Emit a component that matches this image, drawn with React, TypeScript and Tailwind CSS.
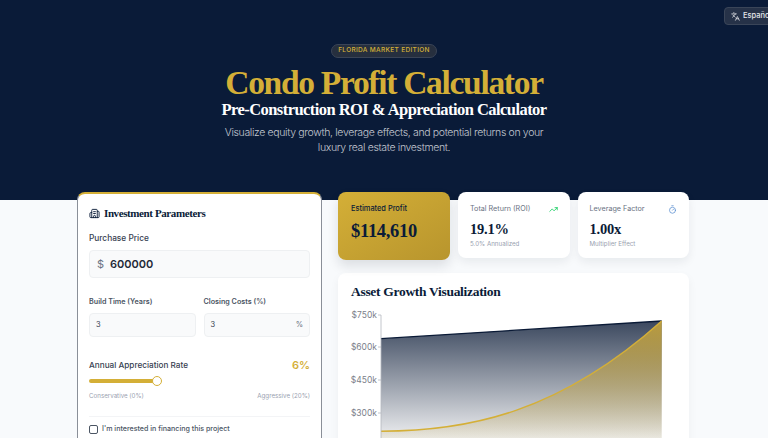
import { Building2, Languages, Timer, TrendingUp } from 'lucide-react'

const serif = "font-['Liberation_Serif',serif]"

function StatCard({ label, value, note, icon }: { label: string; value: string; note: string; icon: React.ReactNode }) {
  return (
    <div className="h-[66px] flex-1 rounded-lg bg-white pl-[12px] pr-[12px] pt-[11px] shadow-[0_4px_10px_rgba(15,23,42,0.07)]">
      <div className="flex items-center justify-between text-[7.2px] leading-[12px] text-gray-500">
        <span>{label}</span>
        {icon}
      </div>
      <div className={`${serif} mt-[5px] text-[14.5px] font-bold leading-[18px] tracking-[-0.2px] text-[#0b1b36]`}>{value}</div>
      <div className="mt-[1px] text-[6.2px] leading-[10px] text-gray-400">{note}</div>
    </div>
  )
}

function GrowthChart() {
  const goldCurve = 'M381 431.3 C470 431 560 412 661.7 321'
  return (
    <svg viewBox="338 300 351 138" className="block h-[138px] w-[351px]">
      <defs>
        <linearGradient id="navyFill" x1="0" y1="321" x2="0" y2="445" gradientUnits="userSpaceOnUse">
          <stop offset="0" stopColor="#0a1a36" stopOpacity="0.8" />
          <stop offset="1" stopColor="#0a1a36" stopOpacity="0.03" />
        </linearGradient>
        <linearGradient id="goldFill" x1="0" y1="321" x2="0" y2="445" gradientUnits="userSpaceOnUse">
          <stop offset="0" stopColor="#c9a63c" stopOpacity="0.9" />
          <stop offset="1" stopColor="#c9a63c" stopOpacity="0.05" />
        </linearGradient>
      </defs>
      <path d="M381 338.7 L661.7 321 L661.7 438 L381 438 Z" fill="url(#navyFill)" />
      <path d={`${goldCurve} L661.7 438 L381 438 Z`} fill="url(#goldFill)" />
      <path d="M381 338.7 L661.7 321" stroke="#0a1a36" strokeWidth="1.3" fill="none" />
      <path d={goldCurve} stroke="#d4af37" strokeWidth="1.5" fill="none" />
      <path d="M381 315 V438" stroke="#b4b8bf" strokeWidth="0.8" />
      {[
        ['$750k', 315],
        ['$600k', 347],
        ['$450k', 380],
        ['$300k', 413],
      ].map(([label, y]) => (
        <g key={label as string}>
          <path d={`M378 ${y} H381`} stroke="#b4b8bf" strokeWidth="0.8" />
          <text x="377" y={(y as number) + 3} textAnchor="end" fontSize="8.5" fill="#7b808a" fontFamily="Inter, sans-serif">
            {label}
          </text>
        </g>
      ))}
    </svg>
  )
}

export default function App() {
  return (
    <div className="relative h-[438px] overflow-hidden bg-[#f8fafc] font-['Inter',sans-serif]">
      <header className="flex h-[200px] flex-col items-center bg-[#0a1b38] pt-[44px]">
        <span className="flex h-[14px] items-center rounded-full border border-[#3a4456] bg-[#262f3e] px-[6px] text-[6.5px] font-medium tracking-[0.05em] text-[#d4af37]">
          FLORIDA MARKET EDITION
        </span>
        <h1 className={`${serif} mt-[5px] text-[33.5px] font-bold leading-[40px] tracking-[-1.3px] text-[#d4af37]`}>Condo Profit Calculator</h1>
        <h2 className={`${serif} text-[16.5px] font-bold leading-[14px] tracking-[-0.55px] text-white`}>Pre-Construction ROI &amp; Appreciation Calculator</h2>
        <p className="mt-[8px] w-[340px] text-center text-[10.5px] font-light leading-[15px] tracking-[-0.35px] text-[#c3c8d1]">
          Visualize equity growth, leverage effects, and potential returns on your luxury real estate investment.
        </p>
      </header>

      <div className="absolute left-[724px] top-[7px] flex h-[18px] w-[60px] items-center gap-[3px] rounded-[4px] border border-[#3a4558] bg-[#263248] pl-[6px] text-[7.5px] font-medium text-[#e5e7eb]">
        <Languages size={9} />
        <span>Español</span>
      </div>

      <main className="mx-[77px] -mt-[8px] flex gap-4">
        <section className="h-[300px] w-[245px] shrink-0 rounded-lg border border-x-[#8a8f98] border-b-[#8a8f98] border-t-2 border-t-[#d4af37] bg-white px-[11px] pt-[11px]">
          <div className="flex items-center gap-[4px] text-[#0a1b38]">
            <Building2 size={11} />
            <span className={`${serif} text-[11px] font-bold leading-[16px] tracking-[-0.4px]`}>Investment Parameters</span>
          </div>
          <label className="mt-[11px] block text-[8.3px] font-medium leading-[12px] text-[#374151]">Purchase Price</label>
          <div className="mt-[6px] flex h-[28px] items-center rounded border border-[#eef0f2] bg-[#f9fafb] pl-[7px] text-[11px] text-[#1f2937]">
            <span className="text-gray-500">$</span>
            <span className="ml-[6px] font-semibold">600000</span>
          </div>
          <div className="mt-[18px] grid grid-cols-2 gap-2">
            <div>
              <label className="block text-[7.2px] font-semibold leading-[11px] text-[#4b5563]">Build Time (Years)</label>
              <div className="mt-[6px] flex h-[24px] items-center rounded border border-[#eef0f2] bg-[#f9fafb] pl-[6px] text-[7.5px] text-[#374151]">3</div>
            </div>
            <div>
              <label className="block text-[7.2px] font-semibold leading-[11px] text-[#4b5563]">Closing Costs (%)</label>
              <div className="mt-[6px] flex h-[24px] items-center justify-between rounded border border-[#eef0f2] bg-[#f9fafb] px-[6px] text-[7.5px] text-[#374151]">
                <span>3</span>
                <span className="text-gray-500">%</span>
              </div>
            </div>
          </div>
          <div className="mt-[22px] flex items-center justify-between">
            <span className="text-[8.2px] font-medium leading-[12px] text-[#374151]">Annual Appreciation Rate</span>
            <span className="text-[11px] font-semibold leading-[12px] text-[#d4af37]">6%</span>
          </div>
          <div className="relative mt-[5px] h-[10px]">
            <div className="absolute left-0 top-[3px] h-[4px] w-[68px] rounded-full bg-[#d4af37]" />
            <div className="absolute left-[63px] top-0 h-[10px] w-[10px] rounded-full border border-[#d4af37] bg-white" />
          </div>
          <div className="mt-[5px] flex justify-between text-[6.2px] leading-[10px] text-gray-400">
            <span>Conservative (0%)</span>
            <span>Aggressive (20%)</span>
          </div>
          <div className="mt-[15px] border-t border-gray-100 pt-[7px]">
            <div className="flex items-center gap-[4px]">
              <span className="h-[9px] w-[9px] rounded-[2px] border border-[#4b5563] bg-white" />
              <span className="text-[7.1px] font-medium leading-[10px] text-[#4b5563]">I'm interested in financing this project</span>
            </div>
          </div>
        </section>

        <div className="w-[351px]">
          <div className="flex gap-2">
            <div className="h-[68px] w-[112px] shrink-0 rounded-lg bg-gradient-to-br from-[#d4af37] to-[#b8952d] px-[13px] pt-[11px] shadow-[0_6px_12px_rgba(15,23,42,0.12)]">
              <div className="text-[7.4px] font-medium leading-[12px] text-[#0a1b38]">Estimated Profit</div>
              <div className={`${serif} mt-[4px] text-[18.5px] font-bold leading-[24px] tracking-[-0.3px] text-[#0a1b38]`}>$114,610</div>
            </div>
            <StatCard label="Total Return (ROI)" value="19.1%" note="5.0% Annualized" icon={<TrendingUp size={9} className="text-green-500" />} />
            <StatCard label="Leverage Factor" value="1.00x" note="Multiplier Effect" icon={<Timer size={9} className="text-[#5b8fd0]" />} />
          </div>
          <section className="mt-[13px] h-[200px] rounded-lg bg-white shadow-[0_4px_10px_rgba(15,23,42,0.05)]">
            <h3 className={`${serif} px-[13px] pt-[10px] text-[13.5px] font-bold leading-[17px] tracking-[-0.3px] text-[#0a1b38]`}>Asset Growth Visualization</h3>
            <GrowthChart />
          </section>
        </div>
      </main>
    </div>
  )
}
